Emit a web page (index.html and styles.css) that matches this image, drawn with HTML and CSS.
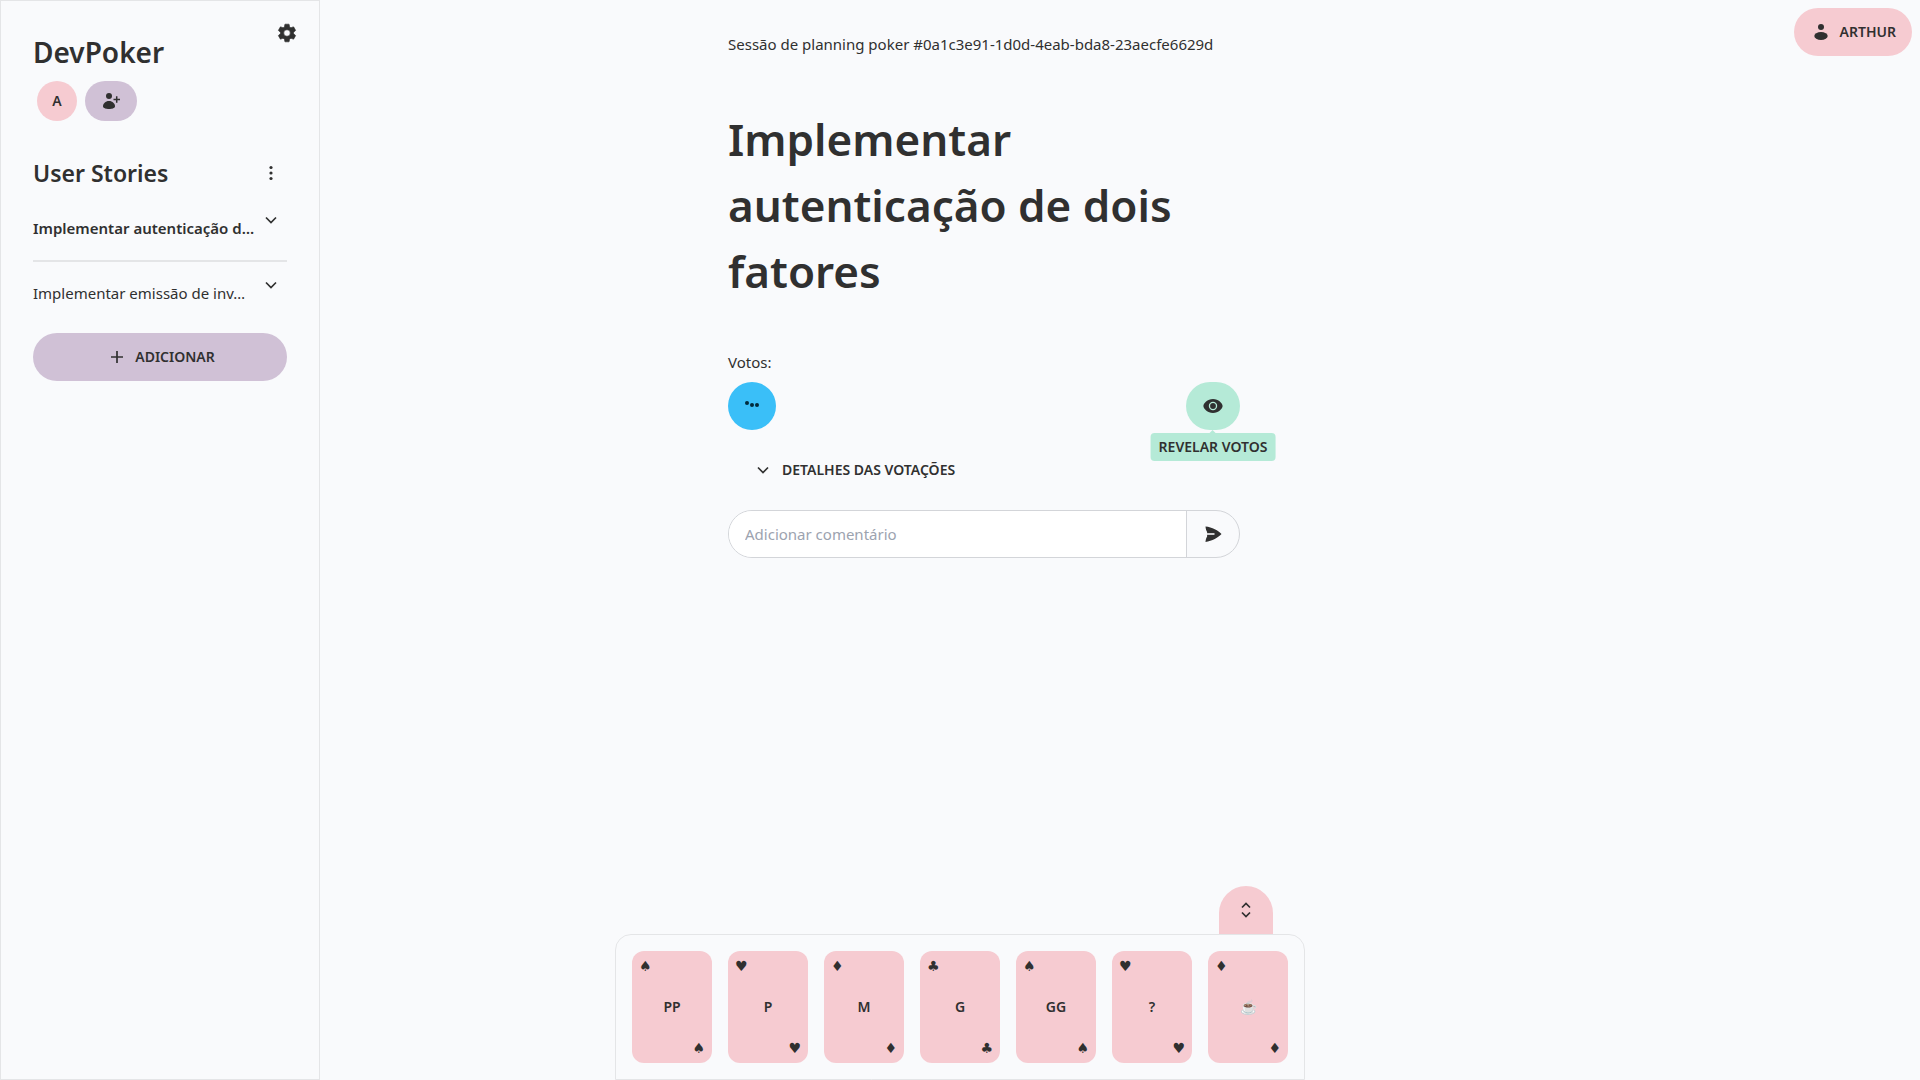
FILE: index.html
```html
<!DOCTYPE html>
<html lang="pt-BR">
<head>
<meta charset="utf-8">
<meta name="viewport" content="width=device-width, initial-scale=1">
<title>DevPoker</title>
<link rel="stylesheet" href="styles.css">
</head>
<body>
<div class="page">
  <aside class="sidebar">
    <button class="icon-btn settings" aria-label="Configurações">
      <svg width="22" height="22" viewBox="0 0 24 24"><path fill="currentColor" stroke="currentColor" stroke-width=".7" d="M19.140 12.940c.04-.3.06-.61.06-.94 0-.32-.02-.64-.07-.94l2.030-1.580a.49.49 0 0 0 .12-.61l-1.920-3.320a.49.49 0 0 0-.59-.22l-2.390.96c-.5-.38-1.030-.7-1.620-.94l-.36-2.540a.48.48 0 0 0-.48-.41h-3.840c-.24 0-.43.17-.47.41l-.36 2.540c-.59.24-1.130.57-1.620.94l-2.390-.96a.48.48 0 0 0-.59.22L2.740 8.870c-.12.21-.08.47.12.61l2.030 1.580c-.05.3-.09.63-.09.94s.02.64.07.94l-2.030 1.580a.49.49 0 0 0-.12.61l1.920 3.320c.12.22.37.29.59.22l2.390-.96c.5.38 1.030.7 1.620.94l.36 2.540c.05.24.24.41.48.41h3.840c.24 0 .44-.17.47-.41l.36-2.540c.59-.24 1.130-.56 1.620-.94l2.390.96c.22.08.47 0 .59-.22l1.920-3.320a.48.48 0 0 0-.12-.61zM12 15.600a3.600 3.600 0 1 1 0-7.200 3.600 3.600 0 0 1 0 7.200z"/></svg>
    </button>
    <h1 class="brand">DevPoker</h1>
    <div class="members">
      <span class="avatar">A</span>
      <button class="invite" aria-label="Convidar participante">
        <svg width="20" height="20" viewBox="0 0 20 20"><circle cx="8" cy="5" r="3" fill="currentColor"/><path fill="currentColor" d="M8 10c3.600 0 6 2.600 6 5.300C14 17.300 11 18 8 18s-6-.7-6-2.700C2 12.600 4.400 10 8 10z"/><path d="M12.500 8.500h6.500M15.700 5.300v6.500" stroke="currentColor" stroke-width="1.500"/></svg>
      </button>
    </div>
    <div class="section-head">
      <h2>User Stories</h2>
      <button class="icon-btn" aria-label="Opções">
        <svg width="16" height="16" viewBox="0 0 16 16" fill="currentColor"><circle cx="8" cy="2.500" r="1.600"/><circle cx="8" cy="8" r="1.600"/><circle cx="8" cy="13.500" r="1.600"/></svg>
      </button>
    </div>
    <ul class="stories">
      <li class="story active"><a href="#">Implementar autenticação d…</a>
        <button class="icon-btn" aria-label="Expandir"><svg width="16" height="16" viewBox="0 0 16 16" fill="none" stroke="currentColor" stroke-width="1.700"><path d="M3 5.500l5 5 5-5"/></svg></button></li>
      <li class="story"><a href="#">Implementar emissão de inv…</a>
        <button class="icon-btn" aria-label="Expandir"><svg width="16" height="16" viewBox="0 0 16 16" fill="none" stroke="currentColor" stroke-width="1.700"><path d="M3 5.500l5 5 5-5"/></svg></button></li>
    </ul>
    <button class="btn add"><svg width="22" height="22" viewBox="0 0 22 22" stroke="currentColor" stroke-width="1.700"><path d="M6 11h12M12 5v12"/></svg>Adicionar</button>
  </aside>

  <main class="content">
    <p class="session">Sessão de planning poker #0a1c3e91-1d0d-4eab-bda8-23aecfe6629d</p>
    <h1 class="title">Implementar autenticação de dois fatores</h1>
    <p class="label">Votos:</p>
    <div class="votes">
      <span class="vote" aria-label="Aguardando"><svg width="16" height="12" viewBox="0 0 16 12" fill="currentColor"><circle cx="3" cy="3" r="2"/><circle cx="8" cy="5" r="2"/><circle cx="13" cy="5" r="2"/></svg></span>
      <div class="reveal">
        <button class="btn reveal-btn" aria-label="Revelar" aria-describedby="tip"><svg width="22" height="22" viewBox="0 0 22 22"><path fill="currentColor" fill-rule="evenodd" d="M11 4c5.500 0 9.600 4.500 9.600 7s-4.100 7-9.600 7-9.600-4.500-9.600-7S5.500 4 11 4zm0 2.800a4.200 4.200 0 1 0 0 8.400 4.200 4.200 0 0 0 0-8.400z"/><circle cx="11" cy="11" r="2.900" fill="currentColor"/></svg></button>
        <span class="tooltip" id="tip" role="tooltip">Revelar votos</span>
      </div>
    </div>
    <button class="btn details"><svg width="22" height="22" viewBox="0 0 22 22" fill="none" stroke="currentColor" stroke-width="1.700"><path d="M6 8.500l5 5 5-5"/></svg>Detalhes das votações</button>
    <form class="comment">
      <input type="text" placeholder="Adicionar comentário" aria-label="Adicionar comentário">
      <button type="button" class="send" aria-label="Enviar"><svg width="20" height="20" viewBox="0 0 20 20"><path fill="currentColor" d="M2.500 2.500C9 3 15.500 6.500 18.500 10 15.500 13.500 9 17 2.500 18c.2-2.200.6-4 1.600-5.500V8C3.100 6.500 2.700 4.700 2.500 2.500z"/><path d="M4 10h7.500" stroke="#d0d0d2" stroke-width="1.800"/></svg></button>
    </form>
  </main>
</div>

<button class="btn profile"><svg width="22" height="22" viewBox="0 0 22 22" fill="currentColor"><circle cx="11" cy="6" r="3"/><ellipse cx="11" cy="15" rx="6.700" ry="4"/></svg>Arthur</button>

<section class="deck" aria-label="Cartas">
  <button class="toggle" aria-label="Recolher cartas"><svg width="12" height="16" viewBox="0 0 12 16" fill="none" stroke="currentColor" stroke-width="1.700"><path d="M2 5.500l4-4 4 4M2 10.500l4 4 4-4"/></svg></button>
  <button class="card"><span class="suit">♠</span><span>PP</span><span class="suit">♠</span></button>
  <button class="card"><span class="suit">♥</span><span>P</span><span class="suit">♥</span></button>
  <button class="card"><span class="suit">♦</span><span>M</span><span class="suit">♦</span></button>
  <button class="card"><span class="suit">♣</span><span>G</span><span class="suit">♣</span></button>
  <button class="card"><span class="suit">♠</span><span>GG</span><span class="suit">♠</span></button>
  <button class="card"><span class="suit">♥</span><span>?</span><span class="suit">♥</span></button>
  <button class="card"><span class="suit">♦</span><span>☕</span><span class="suit">♦</span></button>
</section>
</body>
</html>
```
FILE: styles.css
```css
* { box-sizing: border-box; margin: 0; padding: 0; }

:root {
  --base: #f9fafc;
  --ink: #303030;
  --line: #e4e5e7;
  --pink: #f6cbd1;
  --lilac: #d0c1d6;
  --mint: #b5ead7;
}

body {
  background: var(--base);
  color: var(--ink);
  font: 15px/24px "Noto Sans", sans-serif;
}

svg { display: block; flex: none; }
button { border: 0; background: none; color: inherit; font: inherit; cursor: pointer; }
input { font: inherit; color: inherit; }
a { color: inherit; text-decoration: none; }
ul { list-style: none; }

.page {
  display: grid;
  grid-template-columns: 320px minmax(24px, 3fr) minmax(0, 512px) 5fr;
  min-height: 100vh;
}

.sidebar {
  position: relative;
  padding: 32px;
  border: 1px solid var(--line);
}

.icon-btn { display: grid; place-items: center; width: 32px; height: 32px; }
.settings { position: absolute; top: 16px; right: 16px; }

.brand { font-size: 28px; line-height: 38px; font-weight: 600; }

.members { display: flex; gap: 8px; padding: 10px 4px 0; }
.avatar, .invite {
  display: grid;
  place-items: center;
  height: 40px;
  border-radius: 20px;
  font-size: 14px;
  font-weight: 600;
}
.avatar { width: 40px; background: var(--pink); }
.invite { width: 52px; background: var(--lilac); }

.section-head { display: flex; align-items: center; justify-content: space-between; margin: 32px 0 4px; height: 40px; }
.section-head h2 { font-size: 23px; line-height: 32px; font-weight: 600; }

.story { display: flex; justify-content: space-between; height: 63px; padding-top: 7px; }
.story + .story { border-top: 2px solid var(--line); }
.story a { flex: 1; min-width: 0; padding-top: 12px; white-space: nowrap; }
.active a { font-weight: 600; }

.btn {
  display: flex;
  align-items: center;
  justify-content: center;
  gap: 8px;
  height: 48px;
  padding: 0 16px;
  border-radius: 24px;
  font-size: 14px;
  font-weight: 600;
  text-transform: uppercase;
}
.add { width: 100%; background: var(--lilac); margin-top: 10px; }

.content { grid-column: 3; padding-top: 32px; }
.title { margin: 50px 0 46px; font-size: 44px; line-height: 66px; font-weight: 600; }
.votes { display: flex; justify-content: space-between; margin: 8px 0 16px; }
.vote { display: grid; place-items: center; width: 48px; height: 48px; border-radius: 50%; background: #3abff8; color: #002b3d; }
.reveal { position: relative; }
.reveal-btn { background: var(--mint); }
.tooltip {
  position: absolute;
  top: 51px;
  left: 50%;
  transform: translateX(-50%);
  padding: 4px 8px;
  border-radius: 4px;
  background: var(--mint);
  font-size: 14px;
  line-height: 20px;
  font-weight: 600;
  text-transform: uppercase;
  white-space: nowrap;
}
.tooltip::before {
  content: "";
  position: absolute;
  bottom: 100%;
  left: 50%;
  margin-left: -3px;
  border: 3px solid transparent;
  border-top: 0;
  border-bottom-color: var(--mint);
}
.details { margin-left: 8px; }

.comment { display: flex; height: 48px; margin-top: 16px; border: 1px solid #d3d5d9; border-radius: 24px; overflow: hidden; }
.comment input { flex: 1; min-width: 0; padding: 0 16px; border: 0; background: #fff; }
.comment input::placeholder { color: #9ca3af; opacity: 1; }
.send { display: grid; place-items: center; width: 53px; border-left: 1px solid #d3d5d9; }

.profile { position: fixed; top: 8px; right: 8px; background: var(--pink); }

.deck {
  position: fixed;
  bottom: 0;
  left: 50%;
  transform: translateX(-50%);
  display: flex;
  gap: 16px;
  padding: 16px;
  border: 1px solid var(--line);
  border-radius: 16px 16px 0 0;
  background: var(--base);
}
.toggle {
  position: absolute;
  bottom: calc(100% + 1px);
  right: 31px;
  display: grid;
  place-items: center;
  width: 54px;
  height: 48px;
  border-radius: 27px 27px 0 0;
  background: var(--pink);
}
.card {
  display: flex;
  flex-direction: column;
  align-items: center;
  justify-content: space-between;
  width: 80px;
  height: 112px;
  padding: 7px;
  border-radius: 12px;
  background: var(--pink);
  font-size: 14px;
  line-height: 20px;
  font-weight: 600;
}
.suit { font-family: "DejaVu Sans", sans-serif; font-size: 14px; line-height: 16px; font-weight: 400; }
.suit:first-child { align-self: flex-start; }
.suit:last-child { align-self: flex-end; }
```
